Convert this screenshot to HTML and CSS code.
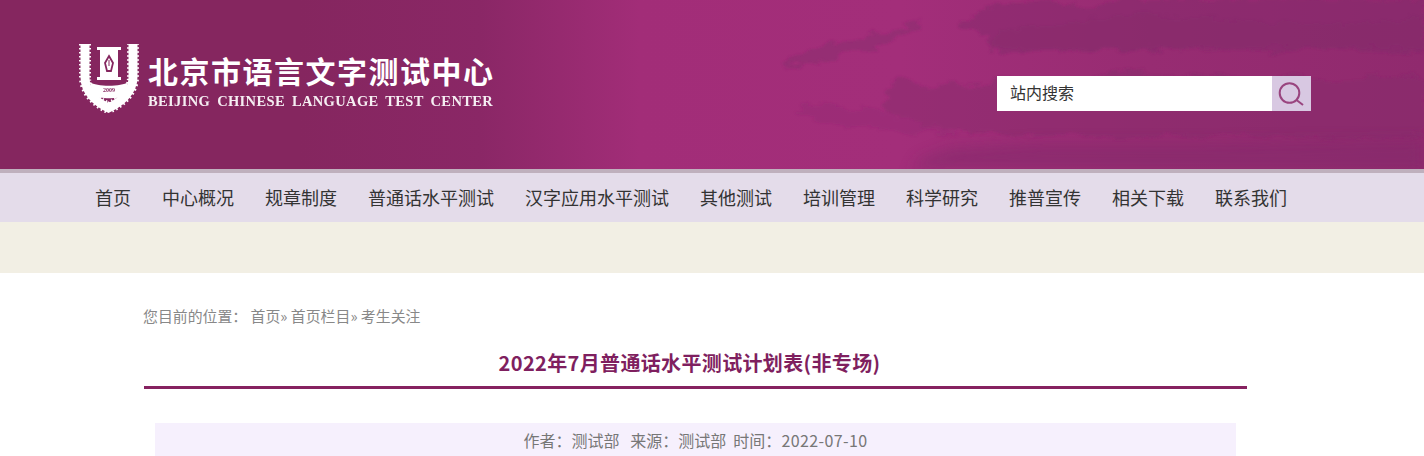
FILE: index.html
```html
<!DOCTYPE html>
<html lang="zh-CN">
<head>
<meta charset="utf-8">
<title>2022年7月普通话水平测试计划表(非专场)</title>
<link rel="stylesheet" href="styles.css">
</head>
<body>
<header class="header">
  <svg class="hills" viewBox="0 0 1424 169" preserveAspectRatio="none" aria-hidden="true">
    <defs>
      <filter id="soft" x="-5%" y="-20%" width="110%" height="140%">
        <feTurbulence type="fractalNoise" baseFrequency="0.05 0.12" numOctaves="4" seed="7" result="n"/>
        <feDisplacementMap in="SourceGraphic" in2="n" scale="16" xChannelSelector="R" yChannelSelector="G"/>
        <feGaussianBlur stdDeviation="1"/>
      </filter>
      <filter id="softer" x="-10%" y="-30%" width="120%" height="160%"><feGaussianBlur stdDeviation="7"/></filter>
    </defs>
    <g fill="#842a6c" filter="url(#soft)">
      <path d="M958 24 L985 10 L1000 4 L1040 2 L1090 8 L1110 0 L1424 0 L1424 52 L1380 55 L1330 47 L1270 52 L1200 49 L1130 50 L1030 52 L990 50 L988 34 L965 30Z" opacity=".5"/>
      <path d="M1000 30 L1060 26 L1120 14 L1300 24 L1424 18 L1424 50 L1330 46 L1200 48 L1030 50 L992 46Z" opacity=".25"/>
      <path d="M783 62 L800 54 L823 44 L850 42 L880 33 L925 20 L905 34 L885 46 L860 50 L835 58 L800 68Z" opacity=".42"/>
      <path d="M885 84 L900 80 L915 86 L985 84 L1010 75 L1030 85 L1080 80 L1130 70 L1170 78 L1215 72 L1250 82 L1300 74 L1340 83 L1380 76 L1424 78 L1424 136 L1340 138 L1240 134 L1120 138 L990 134 L930 126 L885 112Z" opacity=".45"/>
      <path d="M790 110 L830 106 L880 112 L930 126 L960 134 L880 130 L820 122Z" opacity=".2"/>
    </g>
    <path d="M912 186 L918 160 L950 148 L1040 143 L1200 143 L1424 140 L1424 169 L912 169Z" fill="#842a6c" opacity=".6" filter="url(#softer)"/>
  </svg>
  <div class="brand">
    <svg class="emblem" viewBox="0 0 62 72" aria-hidden="true">
      <path class="wreath-edge" d="M7 3 V36 C7 52 20 62 30.500 67 C41 62 55 52 55 36 V3"/>
      <path class="wreath" d="M7 3 V36 C7 52 20 62 30.500 67 C41 62 55 52 55 36 V3"/>
      <path class="ribbon" d="M12 41 C18 46 44 46 50 41 L47 55 C40 58 22 58 15 55Z"/>
      <rect class="scroll" x="22" y="7" width="18" height="31"/>
      <rect class="scroll" x="19" y="6" width="24" height="3"/>
      <rect class="scroll" x="19" y="36" width="24" height="3"/>
      <path class="nib" d="M31 15 L35 22 L33 30 H29 L27 22Z"/>
      <path class="slit" d="M31 19 V25"/>
      <text class="year" x="31" y="51" text-anchor="middle">2009</text>
    </svg>
    <div class="brand-text">
      <div class="brand-cn">北京市语言文字测试中心</div>
      <div class="brand-en">BEIJING CHINESE LANGUAGE TEST CENTER</div>
    </div>
  </div>
  <form class="search">
    <input class="search-input" type="text" value="站内搜索" aria-label="站内搜索">
    <button class="search-btn" type="button" aria-label="搜索">
      <svg viewBox="0 0 39 35" width="39" height="35" aria-hidden="true">
        <circle cx="17.500" cy="17" r="9.800"/>
        <path d="M24.500 24 L31 29"/>
      </svg>
    </button>
  </form>
</header>
<nav class="nav">
  <a href="#">首页</a>
  <a href="#">中心概况</a>
  <a href="#">规章制度</a>
  <a href="#">普通话水平测试</a>
  <a href="#">汉字应用水平测试</a>
  <a href="#">其他测试</a>
  <a href="#">培训管理</a>
  <a href="#">科学研究</a>
  <a href="#">推普宣传</a>
  <a href="#">相关下载</a>
  <a href="#">联系我们</a>
</nav>
<div class="strip"></div>
<main class="content">
  <p class="crumb">您目前的位置：&nbsp;首页» 首页栏目» 考生关注</p>
  <h1 class="title">2022年7月普通话水平测试计划表(非专场)</h1>
  <p class="meta">作者：测试部 &nbsp; 来源：测试部 &nbsp;时间：<span class="date">2022-07-10</span></p>
</main>
</body>
</html>
```
FILE: styles.css
```css
* { box-sizing: border-box; }
html, body { margin: 0; padding: 0; }
body {
  font-family: "Noto Sans CJK SC", "Liberation Sans", sans-serif;
  background: #fff;
  overflow: hidden;
}
.header {
  position: relative;
  height: 173px;
  display: flex;
  align-items: flex-start;
  padding: 41px 113px 0 78px;
  border-bottom: 4px solid #bfb0bd;
  background: linear-gradient(90deg, #85265f 0, #85265f 300px, #8a2766 480px, #a22d78 640px, #a32e7a 900px, #972c72 1150px, #902a6e 1424px);
}
.hills {
  position: absolute;
  left: 0;
  top: 0;
  width: 100%;
  height: 169px;
}
.brand {
  position: relative;
  display: flex;
  align-items: flex-start;
}
.emblem {
  width: 62px;
  height: 72px;
  flex: none;
  filter: blur(.5px);
}
.wreath, .wreath-edge {
  fill: none;
  stroke: #fff;
}
.wreath { stroke-width: 9; }
.wreath-edge { stroke-width: 12; stroke-dasharray: 1.500 2.500; }
.ribbon, .scroll { fill: #fff; }
.nib { fill: none; stroke: #85265f; stroke-width: 1.800; }
.slit { fill: none; stroke: #85265f; stroke-width: 1; }
.year {
  font-family: "Liberation Serif", serif;
  font-size: 6px;
  font-weight: 700;
  fill: #85265f;
}
.brand-text {
  margin: 9px 0 0 8px;
  color: #fff;
}
.brand-cn {
  font-size: 30px;
  font-weight: 700;
  line-height: 40px;
  letter-spacing: 1.500px;
  white-space: nowrap;
}
.brand-en {
  margin-top: 3px;
  font-family: "Liberation Serif", serif;
  font-size: 14.500px;
  font-weight: 700;
  line-height: 16px;
  letter-spacing: .360px;
  word-spacing: 3px;
  white-space: nowrap;
  opacity: .92;
}
.search {
  position: relative;
  display: flex;
  margin: 35px 0 0 auto;
  width: 314px;
  height: 35px;
}
.search-input {
  flex: 1;
  min-width: 0;
  height: 35px;
  border: 0;
  margin: 0;
  padding: 0 0 3px 13px;
  background: #fff;
  color: #333;
  font: 16px "Noto Sans CJK SC", sans-serif;
}
.search-btn {
  width: 39px;
  height: 35px;
  padding: 0;
  border: 0;
  background: #d8c8e2;
}
.search-btn svg {
  display: block;
  fill: none;
  stroke: #99447f;
  stroke-width: 2;
}
.nav {
  display: flex;
  gap: 31px;
  height: 49px;
  padding-left: 95px;
  align-items: center;
  background: #e4dcea;
}
.nav a {
  color: #333;
  font-size: 18px;
  line-height: 49px;
  text-decoration: none;
  white-space: nowrap;
}
.strip {
  height: 51px;
  background: #f2efe4;
}
.content {
  width: 1103px;
  margin-left: 144px;
}
.crumb {
  margin: 0 0 0 -1px;
  padding-top: 33px;
  font-size: 14.900px;
  line-height: 20px;
  color: #888;
}
.title {
  margin: 17px 0 0;
  height: 46px;
  padding-top: 7px;
  padding-right: 12px;
  border-bottom: 3px solid #862260;
  font-size: 20px;
  font-weight: 700;
  line-height: 26px;
  letter-spacing: .350px;
  text-align: center;
  color: #7f1f5f;
}
.meta {
  margin: 34px 11px 0;
  height: 33px;
  background: #f6f0fd;
  font-size: 16px;
  line-height: 34px;
  text-align: center;
  color: #777;
}
.date { letter-spacing: .400px; }
```
